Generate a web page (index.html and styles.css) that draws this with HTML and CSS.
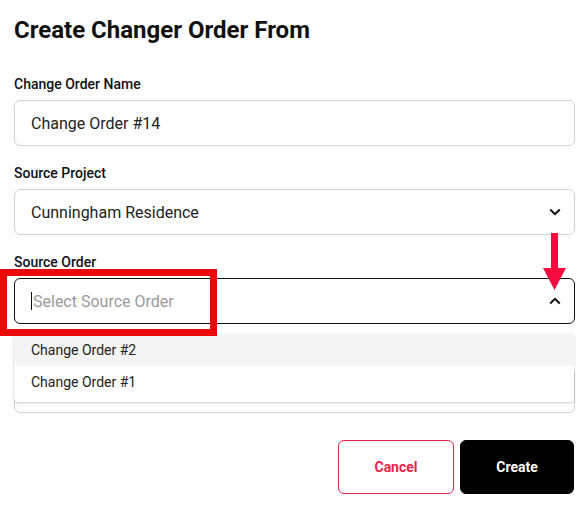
FILE: index.html
```html
<!DOCTYPE html>
<html lang="en">
<head>
    <meta charset="UTF-8">
    <meta name="viewport" content="width=device-width, initial-scale=1.0">
    <title>Create Changer Order From</title>
    <link rel="stylesheet" href="styles.css">
</head>
<body>
    <div class="container">
        <h1>Create Changer Order From</h1>

        <div class="field">
            <label>Change Order Name</label>
            <div class="input">Change Order #14</div>
        </div>

        <div class="field">
            <label>Source Project</label>
            <div class="input select">
                <span>Cunningham Residence</span>
                <svg class="chevron" width="12" height="8" viewBox="0 0 12 8"><path d="M1.2 1.5 L6 6.2 L10.8 1.5" fill="none" stroke="#111" stroke-width="2"/></svg>
            </div>
        </div>

        <div class="field source-order">
            <label>Source Order</label>
            <div class="input select open">
                <span class="placeholder"><i class="caret"></i>Select Source Order</span>
                <svg class="chevron" width="12" height="8" viewBox="0 0 12 8"><path d="M1.2 6.5 L6 1.8 L10.8 6.5" fill="none" stroke="#111" stroke-width="2"/></svg>
            </div>
            <ul class="menu">
                <li class="active">Change Order #2</li>
                <li>Change Order #1</li>
            </ul>
            <div class="highlight"></div>
            <svg class="arrow" width="23" height="57" viewBox="0 0 23 57"><rect x="8" y="0" width="7" height="36" fill="#f50a3f"/><polygon points="0,35 23,35 11.5,57" fill="#f50a3f"/></svg>
        </div>

        <div class="field hidden-field">
            <div class="input"></div>
        </div>

        <div class="actions">
            <button class="btn cancel">Cancel</button>
            <button class="btn create">Create</button>
        </div>
    </div>
</body>
</html>
```

FILE: styles.css
```css
body {
    font-family: Roboto, "Noto Sans", Arial, sans-serif;
    margin: 0;
    padding: 0;
    background-color: #fff;
    color: #111;
}
.container {
    padding: 16px 11px 0 14px;
}
h1 {
    font-size: 24px;
    line-height: 28px;
    font-weight: 700;
    margin: 0 0 32px 0;
    color: #111;
}
.field {
    margin-bottom: 19px;
}
.field label {
    display: block;
    font-size: 14px;
    line-height: 16px;
    font-weight: 500;
    margin-bottom: 8px;
    color: #111;
}
.input {
    box-sizing: border-box;
    height: 46px;
    border: 1px solid #d3d3d3;
    border-radius: 6px;
    padding: 0 13px 0 16px;
    font-size: 16px;
    color: #222;
    display: flex;
    align-items: center;
    justify-content: space-between;
}
.input.open {
    border-color: #111;
}
.placeholder {
    color: #9a9a9a;
    display: flex;
    align-items: center;
}
.caret {
    display: inline-block;
    width: 1px;
    height: 18px;
    background: #111;
    margin: 0 1px 0 0;
}
.source-order {
    position: relative;
}
.menu {
    position: absolute;
    top: 80px;
    left: 0;
    right: 1px;
    margin: 0;
    padding: 0 0 4px 0;
    list-style: none;
    background: #fff;
    border-radius: 4px;
    box-shadow: 0 1px 3px rgba(0,0,0,0.22);
    z-index: 2;
}
.menu li {
    height: 32px;
    line-height: 32px;
    padding-left: 17px;
    font-size: 14px;
    color: #222;
}
.menu li.active {
    background: #f4f4f4;
}
.highlight {
    position: absolute;
    left: -14px;
    top: 15px;
    width: 217px;
    height: 67px;
    box-sizing: border-box;
    border: 7px solid #ea0a0a;
    z-index: 3;
}
.arrow {
    position: absolute;
    left: 529px;
    top: -21px;
    z-index: 3;
}
.hidden-field {
    margin-top: 43px;
    margin-bottom: 27px;
}
.actions {
    display: flex;
    justify-content: flex-end;
    gap: 6px;
    padding-right: 1px;
}
.btn {
    height: 54px;
    border-radius: 6px;
    font-family: Roboto, Arial, sans-serif;
    font-size: 14px;
    font-weight: 700;
    cursor: pointer;
}
.cancel {
    width: 116px;
    background: #fff;
    border: 1px solid #e8244a;
    color: #e8244a;
}
.create {
    width: 114px;
    background: #000;
    border: 1px solid #000;
    color: #fff;
}
```
